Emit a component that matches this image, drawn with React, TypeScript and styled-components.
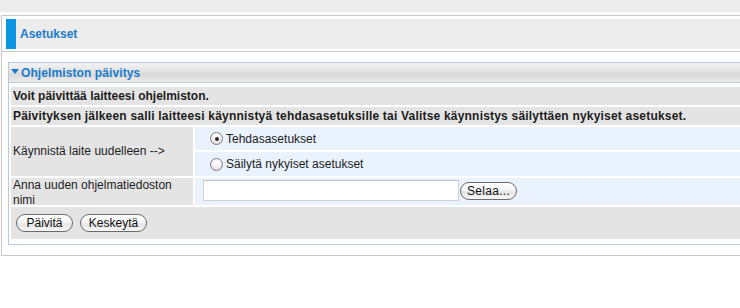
import React from 'react';
import styled, { createGlobalStyle } from 'styled-components';

const GlobalStyle = createGlobalStyle`
  html, body {
    margin: 0;
    padding: 0;
    background: #ffffff;
    overflow: hidden;
  }
  body {
    font-family: 'Liberation Sans', Arial, Helvetica, sans-serif;
    font-size: 12px;
    color: #111;
  }
`;

const Page = styled.div`
  width: 100%;
`;

const TopBand = styled.div`
  height: 12px;
  background: #ececec;
  margin-bottom: 3px;
`;

const OuterBox = styled.div`
  margin-left: 1px;
  border: 1px solid #c8c8c8;
  border-right: none;
`;

const TitleArea = styled.div`
  padding: 3px 0 2px 4px;
  border-bottom: 1px solid #c8c8c8;
`;

const TitleBar = styled.div`
  height: 30px;
  display: flex;
  align-items: center;
  background: #ececec;
  border-left: 10px solid #0b95e4;
  padding-left: 4px;
  font-weight: bold;
  color: #1a7bcc;
`;

const Body = styled.div`
  padding: 10px 0 10px 6px;
`;

const Panel = styled.div`
  border: 1px solid #b9cadb;
  border-right: none;
`;

const PanelHeader = styled.div`
  height: 19px;
  display: flex;
  align-items: center;
  gap: 2px;
  padding-left: 2px;
  background: linear-gradient(#f3f3f3 0%, #e2e2e2 45%, #d9d9d9 60%, #ebebeb 100%);
  border-bottom: 1px solid #b9cadb;
  font-weight: bold;
  color: #1a7bcc;
  letter-spacing: 0.1px;
`;

const Caret = styled.span`
  width: 0;
  height: 0;
  border-left: 4px solid transparent;
  border-right: 4px solid transparent;
  border-top: 5px solid #1a7bcc;
  margin-top: -3px;
`;

const FormGrid = styled.div`
  display: grid;
  grid-template-columns: 182px 1fr;
  grid-template-rows: 18px 18px 23px 24px 27px 32px;
  gap: 2px;
  padding: 4px 0 5px 2px;
`;

const Cell = styled.div<{ $tone?: 'gray' | 'blue'; $span?: boolean; $rows?: number; $top?: boolean }>`
  display: flex;
  align-items: ${(p) => (p.$top ? 'flex-start' : 'center')};
  padding-left: 2px;
  background: ${(p) => (p.$tone === 'blue' ? '#eaf3fd' : '#e4e4e4')};
  ${(p) => (p.$span ? 'grid-column: 1 / span 2;' : '')}
  ${(p) => (p.$rows ? `grid-row: span ${p.$rows};` : '')}
`;

const Strong = styled.span<{ $wide?: boolean }>`
  font-weight: bold;
  color: #1c1c1c;
  letter-spacing: ${(p) => (p.$wide ? '0.2px' : '0')};
`;

const Label = styled.span`
  line-height: 15px;
  color: #1c1c1c;
`;

const RadioRow = styled.label`
  display: flex;
  align-items: center;
  gap: 3px;
  padding-left: 13px;
  color: #1c1c1c;
`;

const RadioCircle = styled.span<{ $checked?: boolean }>`
  width: 13px;
  height: 13px;
  box-sizing: border-box;
  border-radius: 50%;
  border: 1px solid #7d7d7d;
  background: radial-gradient(circle at 50% 30%, #ffffff 0%, #f2f2f2 45%, #d2d2d2 100%);
  display: flex;
  align-items: center;
  justify-content: center;
  &::after {
    content: '';
    width: 4px;
    height: 4px;
    border-radius: 50%;
    background: ${(p) => (p.$checked ? '#2a2a2a' : 'transparent')};
  }
`;

const FileRow = styled.div`
  display: flex;
  align-items: flex-start;
  padding: 2px 0 0 6px;
`;

const FileInput = styled.div`
  width: 256px;
  height: 21px;
  box-sizing: border-box;
  background: #fff;
  border: 1px solid #d2d2d2;
  border-top-color: #c2c2c2;
`;

const AquaButton = styled.button<{ $w: number }>`
  width: ${(p) => p.$w}px;
  height: 18px;
  box-sizing: border-box;
  padding: 0;
  border: 1px solid #6b6b6b;
  border-radius: 9px;
  background: linear-gradient(#ffffff 0%, #f4f4f4 50%, #e3e3e3 55%, #f7f7f7 100%);
  font-family: 'Liberation Sans', Arial, Helvetica, sans-serif;
  font-size: 12px;
  color: #111;
  line-height: 16px;
`;

const BrowseButton = styled(AquaButton)`
  margin-top: 2px;
  margin-left: 1px;
  letter-spacing: 0.3px;
`;

const ButtonRow = styled.div`
  display: flex;
  align-items: center;
  gap: 7px;
  padding-left: 5px;
  background: #e4e4e4;
  grid-column: 1 / span 2;
`;

export default function App() {
  return (
    <Page>
      <GlobalStyle />
      <TopBand />
      <OuterBox>
        <TitleArea>
          <TitleBar>Asetukset</TitleBar>
        </TitleArea>
        <Body>
          <Panel>
            <PanelHeader>
              <Caret />
              Ohjelmiston päivitys
            </PanelHeader>
            <FormGrid>
              <Cell $span>
                <Strong>Voit päivittää laitteesi ohjelmiston.</Strong>
              </Cell>
              <Cell $span>
                <Strong $wide>
                  Päivityksen jälkeen salli laitteesi käynnistyä tehdasasetuksille tai Valitse käynnistys
                  säilyttäen nykyiset asetukset.
                </Strong>
              </Cell>
              <Cell $rows={2}>
                <Label>Käynnistä laite uudelleen --&gt;</Label>
              </Cell>
              <Cell $tone="blue">
                <RadioRow>
                  <RadioCircle $checked />
                  Tehdasasetukset
                </RadioRow>
              </Cell>
              <Cell $tone="blue">
                <RadioRow>
                  <RadioCircle />
                  Säilytä nykyiset asetukset
                </RadioRow>
              </Cell>
              <Cell $top>
                <Label>Anna uuden ohjelmatiedoston nimi</Label>
              </Cell>
              <Cell $tone="blue" $top>
                <FileRow>
                  <FileInput />
                  <BrowseButton $w={57}>Selaa...</BrowseButton>
                </FileRow>
              </Cell>
              <ButtonRow>
                <AquaButton $w={57}>Päivitä</AquaButton>
                <AquaButton $w={67}>Keskeytä</AquaButton>
              </ButtonRow>
            </FormGrid>
          </Panel>
        </Body>
      </OuterBox>
    </Page>
  );
}
